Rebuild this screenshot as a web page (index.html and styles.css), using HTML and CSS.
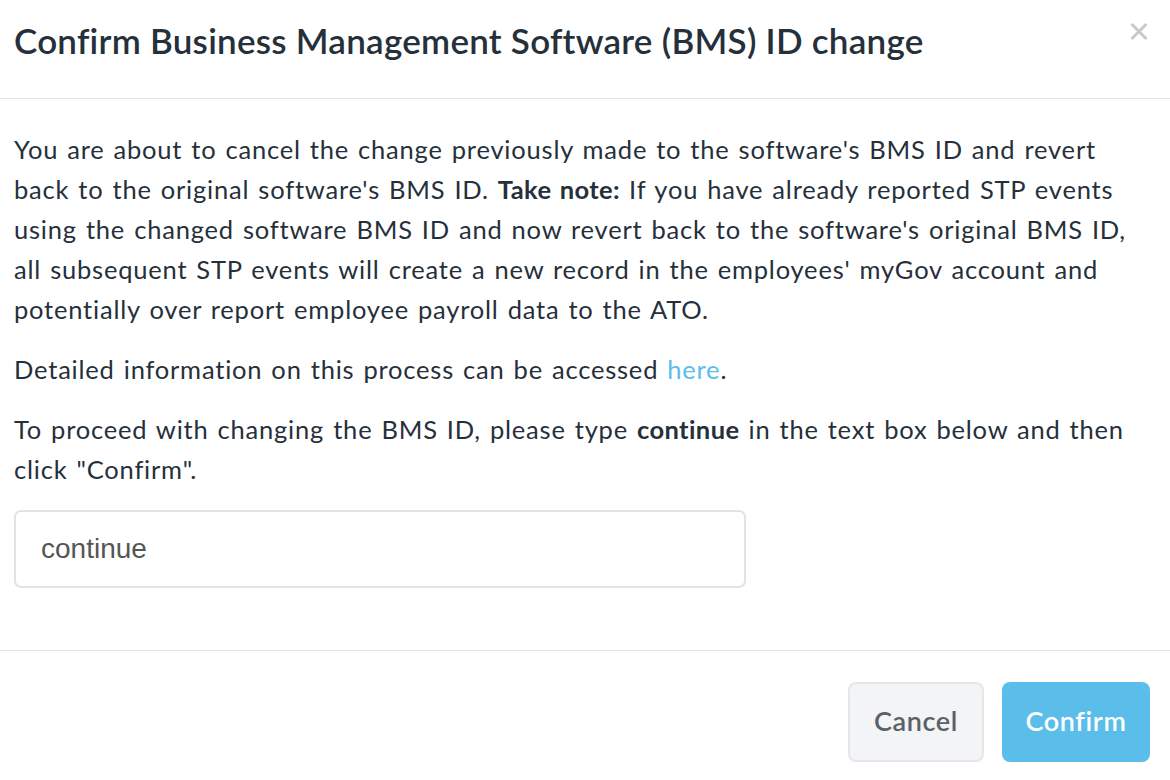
FILE: index.html
```html
<!DOCTYPE html>
<html>
<head>
<meta charset="utf-8">
<link rel="stylesheet" href="styles.css">
</head>
<body>
<div class="modal">
  <div class="modal-header">
    <h1 class="modal-title">Confirm Business Management Software (BMS) ID change</h1>
    <button class="close" aria-label="Close">
      <svg width="18" height="17" viewBox="0 0 18 17"><path d="M1.5 1 L16.5 16 M16.5 1 L1.5 16" stroke="#cacaca" stroke-width="3" stroke-linecap="butt"/></svg>
    </button>
  </div>
  <div class="modal-body">
    <p>You are about to cancel the change previously made to the software's BMS ID and revert back to the original software's BMS ID. <strong>Take note:</strong> If you have already reported STP events using the changed software BMS ID and now revert back to the software's original BMS ID, all subsequent STP events will create a new record in the employees' myGov account and potentially over report employee payroll data to the ATO.</p>
    <p>Detailed information on this process can be accessed <a href="#">here</a>.</p>
    <p>To proceed with changing the BMS ID, please type <strong>continue</strong> in the text box below and then click "Confirm".</p>
    <input class="text-input" type="text" value="continue">
  </div>
  <div class="modal-footer">
    <button class="btn btn-cancel">Cancel</button>
    <button class="btn btn-confirm">Confirm</button>
  </div>
</div>
</body>
</html>
```
FILE: styles.css
```css
html, body {
  margin: 0;
  padding: 0;
  background: #ffffff;
}
body {
  font-family: Lato, "Open Sans", sans-serif;
  color: #26303b;
}
.modal {
  width: 1170px;
  height: 780px;
  display: flex;
  flex-direction: column;
}
.modal-header {
  height: 98px;
  flex-shrink: 0;
  border-bottom: 1px solid #e3e3e3;
  display: flex;
  align-items: flex-start;
  justify-content: space-between;
  padding: 0 14px;
}
.modal-title {
  margin: 0;
  padding-top: 19px;
  font-size: 35px;
  line-height: 42px;
  font-weight: 600;
  letter-spacing: 0.25px;
  color: #25303b;
}
.close {
  background: none;
  border: none;
  padding: 0;
  margin-top: 23px;
  margin-right: 8px;
  cursor: pointer;
  line-height: 0;
}
.modal-body {
  padding: 30px 16px 0 14px;
  height: 552px;
  flex-shrink: 0;
  box-sizing: border-box;
  border-bottom: 1px solid #e3e3e3;
}
.modal-body p {
  margin: 0 0 20px 0;
  font-size: 25.5px;
  line-height: 40px;
  letter-spacing: 0.8px;
  word-spacing: 1.7px;
}
.modal-body strong {
  font-weight: 700;
  letter-spacing: 0.4px;
}
.modal-body a {
  color: #5bbdea;
  text-decoration: none;
}
.text-input {
  display: block;
  box-sizing: border-box;
  width: 732px;
  height: 78px;
  margin-top: 21px;
  border: 2px solid #dfe3e8;
  border-radius: 7px;
  padding: 0 25px;
  font-family: "Liberation Sans", Arial, sans-serif;
  font-size: 28px;
  color: #555555;
  outline: none;
}
.modal-footer {
  display: flex;
  justify-content: flex-end;
  gap: 18px;
  padding: 31px 20px 0 0;
}
.btn {
  height: 80px;
  border-radius: 8px;
  font-family: Lato, sans-serif;
  font-size: 27px;
  font-weight: 600;
  letter-spacing: 0.6px;
  padding: 0 0 3px 0;
  cursor: pointer;
}
.btn-cancel {
  width: 136px;
  background: #f3f4f6;
  border: 2px solid #e4e6ea;
  color: #5a6068;
}
.btn-confirm {
  width: 148px;
  background: #5bbdea;
  border: none;
  color: #ffffff;
}
```
